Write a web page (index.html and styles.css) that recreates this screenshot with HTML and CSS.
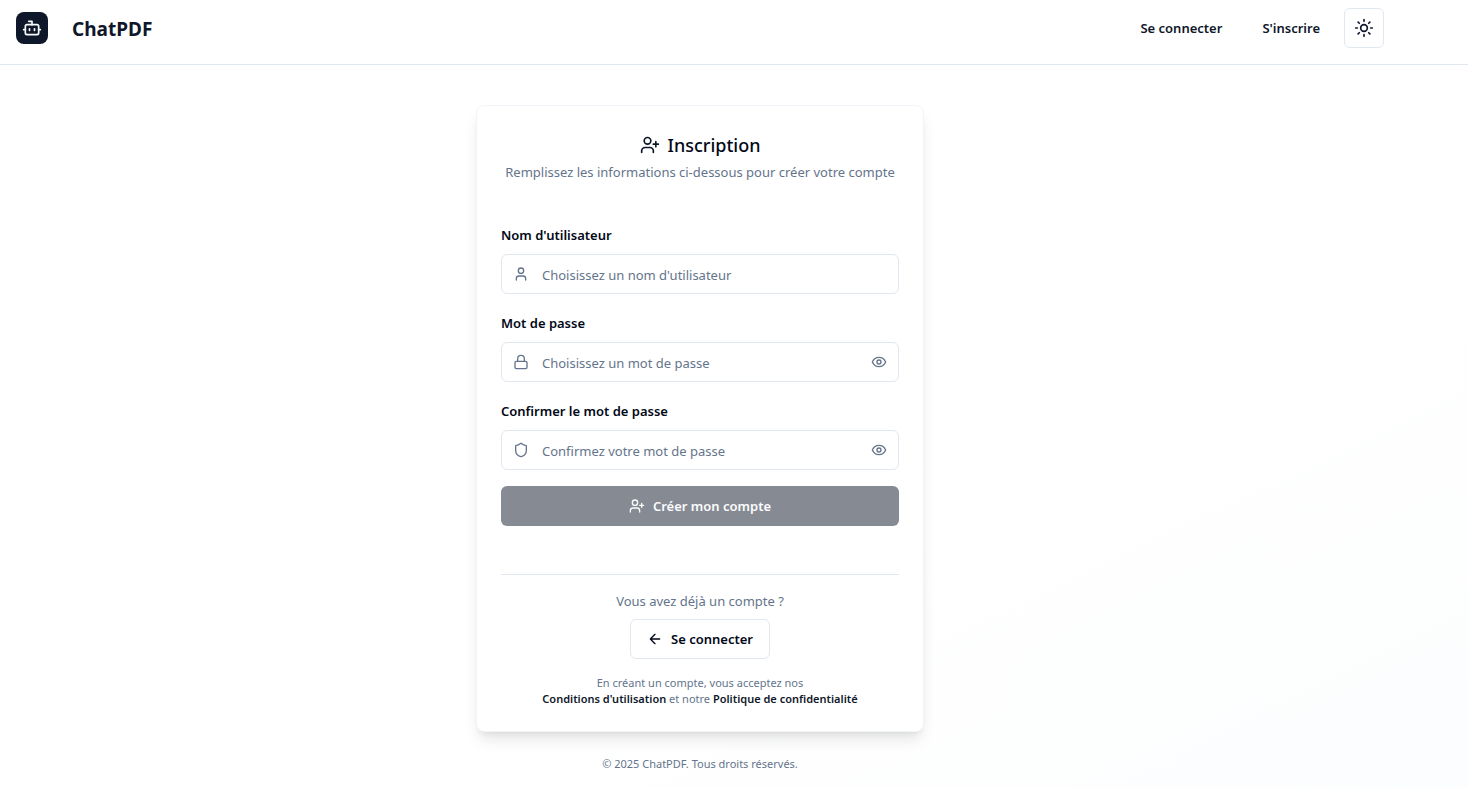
FILE: index.html
```html
<!DOCTYPE html>
<html lang="fr">
<head>
  <meta charset="utf-8">
  <meta name="viewport" content="width=device-width, initial-scale=1">
  <title>ChatPDF – Inscription</title>
  <link rel="stylesheet" href="styles.css">
</head>
<body>
  <header class="site-header">
    <div class="container site-header__inner">
      <div class="brand">
        <span class="brand__logo">
          <svg class="icon icon--md" viewBox="0 0 24 24" aria-hidden="true"><path d="M12 8V4H8"/><rect width="16" height="12" x="4" y="8" rx="2"/><path d="M2 14h2M20 14h2M15 13v2M9 13v2"/></svg>
        </span>
        <span class="brand__name">ChatPDF</span>
      </div>
      <nav class="nav">
        <a class="nav__link" href="#">Se connecter</a>
        <a class="nav__link" href="#">S'inscrire</a>
        <button class="theme-toggle" type="button" aria-label="Changer de thème">
          <svg class="icon icon--md" viewBox="0 0 24 24" aria-hidden="true"><circle cx="12" cy="12" r="4"/><path d="M12 2v2M12 20v2M4.93 4.93l1.41 1.41M17.66 17.66l1.41 1.41M2 12h2M20 12h2M6.34 17.66l-1.41 1.41M19.07 4.93l-1.41 1.41"/></svg>
        </button>
      </nav>
    </div>
  </header>

  <main class="page">
    <div class="container page__inner">
      <section class="card">
        <div class="card__header">
          <h1 class="card__title">
            <svg class="icon icon--md" viewBox="0 0 24 24" aria-hidden="true"><path d="M16 21v-2a4 4 0 0 0-4-4H6a4 4 0 0 0-4 4v2"/><circle cx="9" cy="7" r="4"/><path d="M19 8v6M22 11h-6"/></svg>
            Inscription
          </h1>
          <p class="card__text">Remplissez les informations ci-dessous pour créer votre compte</p>
        </div>

        <form class="form">
          <div class="field">
            <label class="field__label" for="username">Nom d'utilisateur</label>
            <div class="field__box">
              <svg class="icon" viewBox="0 0 24 24" aria-hidden="true"><path d="M19 21v-2a4 4 0 0 0-4-4H9a4 4 0 0 0-4 4v2"/><circle cx="12" cy="7" r="4"/></svg>
              <input class="field__input" id="username" type="text" placeholder="Choisissez un nom d'utilisateur">
            </div>
          </div>
          <div class="field">
            <label class="field__label" for="password">Mot de passe</label>
            <div class="field__box">
              <svg class="icon" viewBox="0 0 24 24" aria-hidden="true"><rect width="18" height="11" x="3" y="11" rx="2"/><path d="M7 11V7a5 5 0 0 1 10 0v4"/></svg>
              <input class="field__input" id="password" type="password" placeholder="Choisissez un mot de passe">
              <button class="field__toggle" type="button" aria-label="Afficher le mot de passe">
                <svg class="icon" viewBox="0 0 24 24" aria-hidden="true"><path d="M2 12s3-7 10-7 10 7 10 7-3 7-10 7-10-7-10-7Z"/><circle cx="12" cy="12" r="3"/></svg>
              </button>
            </div>
          </div>
          <div class="field">
            <label class="field__label" for="confirm">Confirmer le mot de passe</label>
            <div class="field__box">
              <svg class="icon" viewBox="0 0 24 24" aria-hidden="true"><path d="M20 13c0 5-3.5 7.5-7.66 8.95a1 1 0 0 1-.67-.01C7.5 20.5 4 18 4 13V6a1 1 0 0 1 1-1c2 0 4.5-1.2 6.24-2.72a1.17 1.17 0 0 1 1.52 0C14.51 3.81 17 5 19 5a1 1 0 0 1 1 1z"/></svg>
              <input class="field__input" id="confirm" type="password" placeholder="Confirmez votre mot de passe">
              <button class="field__toggle" type="button" aria-label="Afficher la confirmation">
                <svg class="icon" viewBox="0 0 24 24" aria-hidden="true"><path d="M2 12s3-7 10-7 10 7 10 7-3 7-10 7-10-7-10-7Z"/><circle cx="12" cy="12" r="3"/></svg>
              </button>
            </div>
          </div>
          <button class="submit" type="submit" disabled>
            <svg class="icon" viewBox="0 0 24 24" aria-hidden="true"><path d="M16 21v-2a4 4 0 0 0-4-4H6a4 4 0 0 0-4 4v2"/><circle cx="9" cy="7" r="4"/><path d="M19 8v6M22 11h-6"/></svg>
            Créer mon compte
          </button>
        </form>

        <div class="card__footer">
          <p class="card__text">Vous avez déjà un compte ?</p>
          <a class="login" href="#">
            <svg class="icon" viewBox="0 0 24 24" aria-hidden="true"><path d="m12 19-7-7 7-7M19 12H5"/></svg>
            Se connecter
          </a>
          <p class="legal">En créant un compte, vous acceptez nos<br><a class="legal__link" href="#">Conditions d'utilisation</a> et notre <a class="legal__link" href="#">Politique de confidentialité</a></p>
        </div>
      </section>
      <p class="copyright">© 2025 ChatPDF. Tous droits réservés.</p>
    </div>
  </main>
</body>
</html>
```

FILE: styles.css
```css
*,
*::before,
*::after {
  box-sizing: border-box;
}

:root {
  --fg: #020817;
  --primary: #0f172a;
  --muted: #64748b;
  --border: #e2e8f0;
}

body {
  margin: 0;
  background: #fff;
  color: var(--fg);
  font-family: "Segoe UI", "Noto Sans", "Open Sans", sans-serif;
  font-size: 13px;
  line-height: 20px;
}

h1,
p {
  margin: 0;
}

a {
  color: inherit;
  text-decoration: none;
}

button,
input {
  font: inherit;
  color: inherit;
}

.icon {
  width: 16px;
  height: 16px;
  flex: none;
  fill: none;
  stroke: currentColor;
  stroke-width: 2;
  stroke-linecap: round;
  stroke-linejoin: round;
}

.icon--md {
  width: 20px;
  height: 20px;
}

.container {
  max-width: 1400px;
  padding: 0 16px;
}

.site-header {
  border-bottom: 1px solid var(--border);
}

.site-header__inner {
  display: flex;
  align-items: center;
  justify-content: space-between;
  padding-top: 8px;
  padding-bottom: 16px;
}

.brand {
  display: flex;
  align-items: center;
  gap: 24px;
  color: var(--primary);
}

.brand__logo {
  display: grid;
  place-items: center;
  width: 32px;
  height: 32px;
  border-radius: 8px;
  background: var(--primary);
  color: #f8fafc;
}

.brand__name {
  padding-top: 2px;
  font-size: 19px;
  line-height: 28px;
  font-weight: 700;
}

.nav {
  display: flex;
  align-items: center;
  gap: 8px;
  color: var(--primary);
  font-weight: 600;
}

.nav__link {
  padding: 10px 16px;
}

.theme-toggle {
  display: grid;
  place-items: center;
  width: 40px;
  height: 40px;
  padding: 0;
  border: 1px solid var(--border);
  border-radius: 6px;
  background: #fff;
}

.page {
  background: linear-gradient(to bottom right, #fff 58%, #fcfdfe);
}

.page__inner {
  display: flex;
  flex-direction: column;
  align-items: center;
  gap: 24px;
  padding-top: 40px;
  padding-bottom: 16px;
}

.card {
  width: 100%;
  max-width: 448px;
  padding: 24px;
  border: 1px solid #f1f5f9;
  border-radius: 8px;
  background: #fff;
  box-shadow: 0 10px 15px -3px rgb(0 0 0 / 10%), 0 4px 6px -4px rgb(0 0 0 / 10%);
}

.card__header {
  text-align: center;
}

.card__title {
  display: flex;
  align-items: center;
  justify-content: center;
  gap: 8px;
  margin-bottom: 2px;
  font-size: 18px;
  line-height: 30px;
  font-weight: 500;
}

.card__title .icon {
  color: var(--primary);
}

.card__text {
  color: var(--muted);
}

.form {
  display: grid;
  gap: 16px;
  padding: 40px 0 48px;
}

.field {
  display: grid;
  gap: 8px;
}

.field__label {
  padding-top: 2px;
  font-weight: 600;
  line-height: 22px;
}

.field__box {
  display: flex;
  align-items: center;
  gap: 12px;
  height: 40px;
  padding: 0 11px;
  border: 1px solid var(--border);
  border-radius: 6px;
  background: #fff;
  color: var(--muted);
}

.field__input {
  flex: 1;
  min-width: 0;
  height: 100%;
  padding: 2px 0 0 1px;
  border: 0;
  outline: 0;
  background: transparent;
  color: var(--fg);
}

.field__input::placeholder {
  color: var(--muted);
  opacity: 1;
}

.field__toggle {
  display: flex;
  padding: 0;
  border: 0;
  background: none;
  color: var(--muted);
}

.submit {
  display: flex;
  align-items: center;
  justify-content: center;
  gap: 8px;
  height: 40px;
  border: 0;
  border-radius: 6px;
  background: var(--primary);
  color: #f8fafc;
  font-weight: 600;
  opacity: 0.5;
}

.card__footer {
  display: flex;
  flex-direction: column;
  align-items: center;
  padding-top: 16px;
  border-top: 1px solid var(--border);
  text-align: center;
}

.login {
  display: flex;
  align-items: center;
  gap: 8px;
  height: 40px;
  margin: 8px 0 16px;
  padding: 0 16px;
  border: 1px solid var(--border);
  border-radius: 6px;
  background: #fff;
  font-weight: 600;
}

.legal,
.copyright {
  color: var(--muted);
  font-size: 11px;
  line-height: 16px;
}

.legal__link {
  color: var(--primary);
  font-weight: 600;
}
```
